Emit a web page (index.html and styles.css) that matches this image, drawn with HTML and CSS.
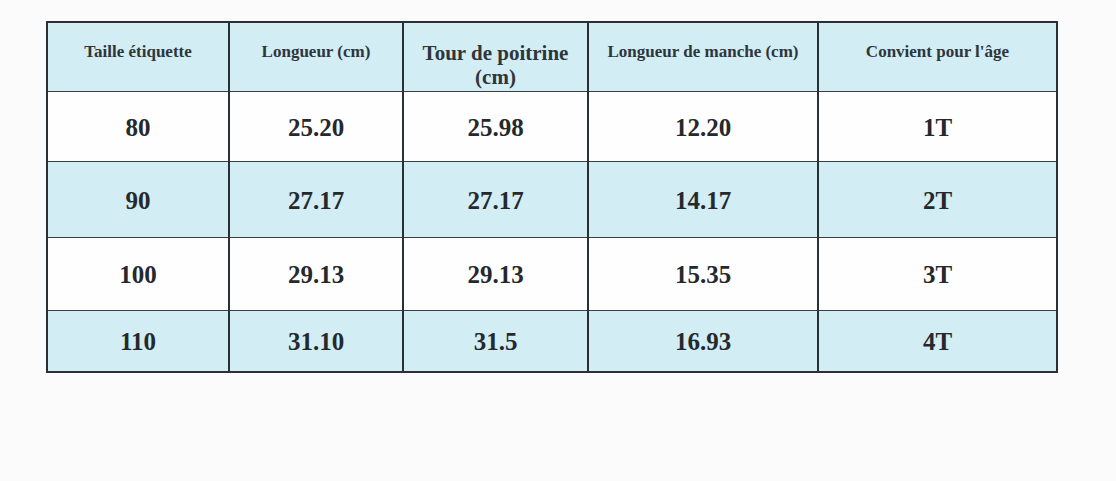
FILE: index.html
```html
<!DOCTYPE html>
<html lang="fr">
<head>
<meta charset="utf-8">
<title>Guide des tailles</title>
<link rel="stylesheet" href="styles.css">
</head>
<body>
<main class="page">
  <table class="size-table">
    <colgroup>
      <col class="c1"><col class="c2"><col class="c3"><col class="c4"><col class="c5">
    </colgroup>
    <thead>
      <tr class="head">
        <th>Taille étiquette</th>
        <th>Longueur (cm)</th>
        <th class="big">Tour de poitrine<br>(cm)</th>
        <th>Longueur de manche (cm)</th>
        <th>Convient pour l'âge</th>
      </tr>
    </thead>
    <tbody>
      <tr class="r1 white"><td>80</td><td>25.20</td><td>25.98</td><td>12.20</td><td>1T</td></tr>
      <tr class="r2 blue"><td>90</td><td>27.17</td><td>27.17</td><td>14.17</td><td>2T</td></tr>
      <tr class="r3 white"><td>100</td><td>29.13</td><td>29.13</td><td>15.35</td><td>3T</td></tr>
      <tr class="r4 blue"><td>110</td><td>31.10</td><td>31.5</td><td>16.93</td><td>4T</td></tr>
    </tbody>
  </table>
</main>
</body>
</html>
```

FILE: styles.css
```css
html, body {
  margin: 0;
  padding: 0;
  background: #fcfbfb;
}

.page {
  padding: 21px 0 0 46px;
  height: 460px;
}

.size-table {
  border-collapse: collapse;
  table-layout: fixed;
  width: 1012px;
  font-family: "Liberation Serif", "Times New Roman", serif;
  font-weight: bold;
  color: #25292d;
  border: 2px solid #2b3035;
}

.c1 { width: 182px; }
.c2 { width: 174px; }
.c3 { width: 185px; }
.c4 { width: 230px; }
.c5 { width: 239px; }

.size-table th,
.size-table td {
  border-left: 2px solid #2b3035;
  border-right: 2px solid #2b3035;
  border-top: 1px solid #3a4045;
  border-bottom: 1px solid #3a4045;
  text-align: center;
  padding: 0;
}

.size-table th {
  vertical-align: top;
  font-size: 17px;
  line-height: 18px;
  padding-top: 20px;
  color: #2e363b;
}

.size-table th.big {
  font-size: 21px;
  line-height: 24px;
  padding-top: 18px;
}

.size-table td {
  font-size: 25px;
  vertical-align: middle;
  padding-top: 3px;
}

.head { height: 69px; background: #d3edf5; }
.r1 { height: 70px; }
.r2 { height: 76px; }
.r3 { height: 73px; }
.r4 { height: 62px; }

.white { background: #fefefe; }
.blue { background: #d3edf5; }
```
